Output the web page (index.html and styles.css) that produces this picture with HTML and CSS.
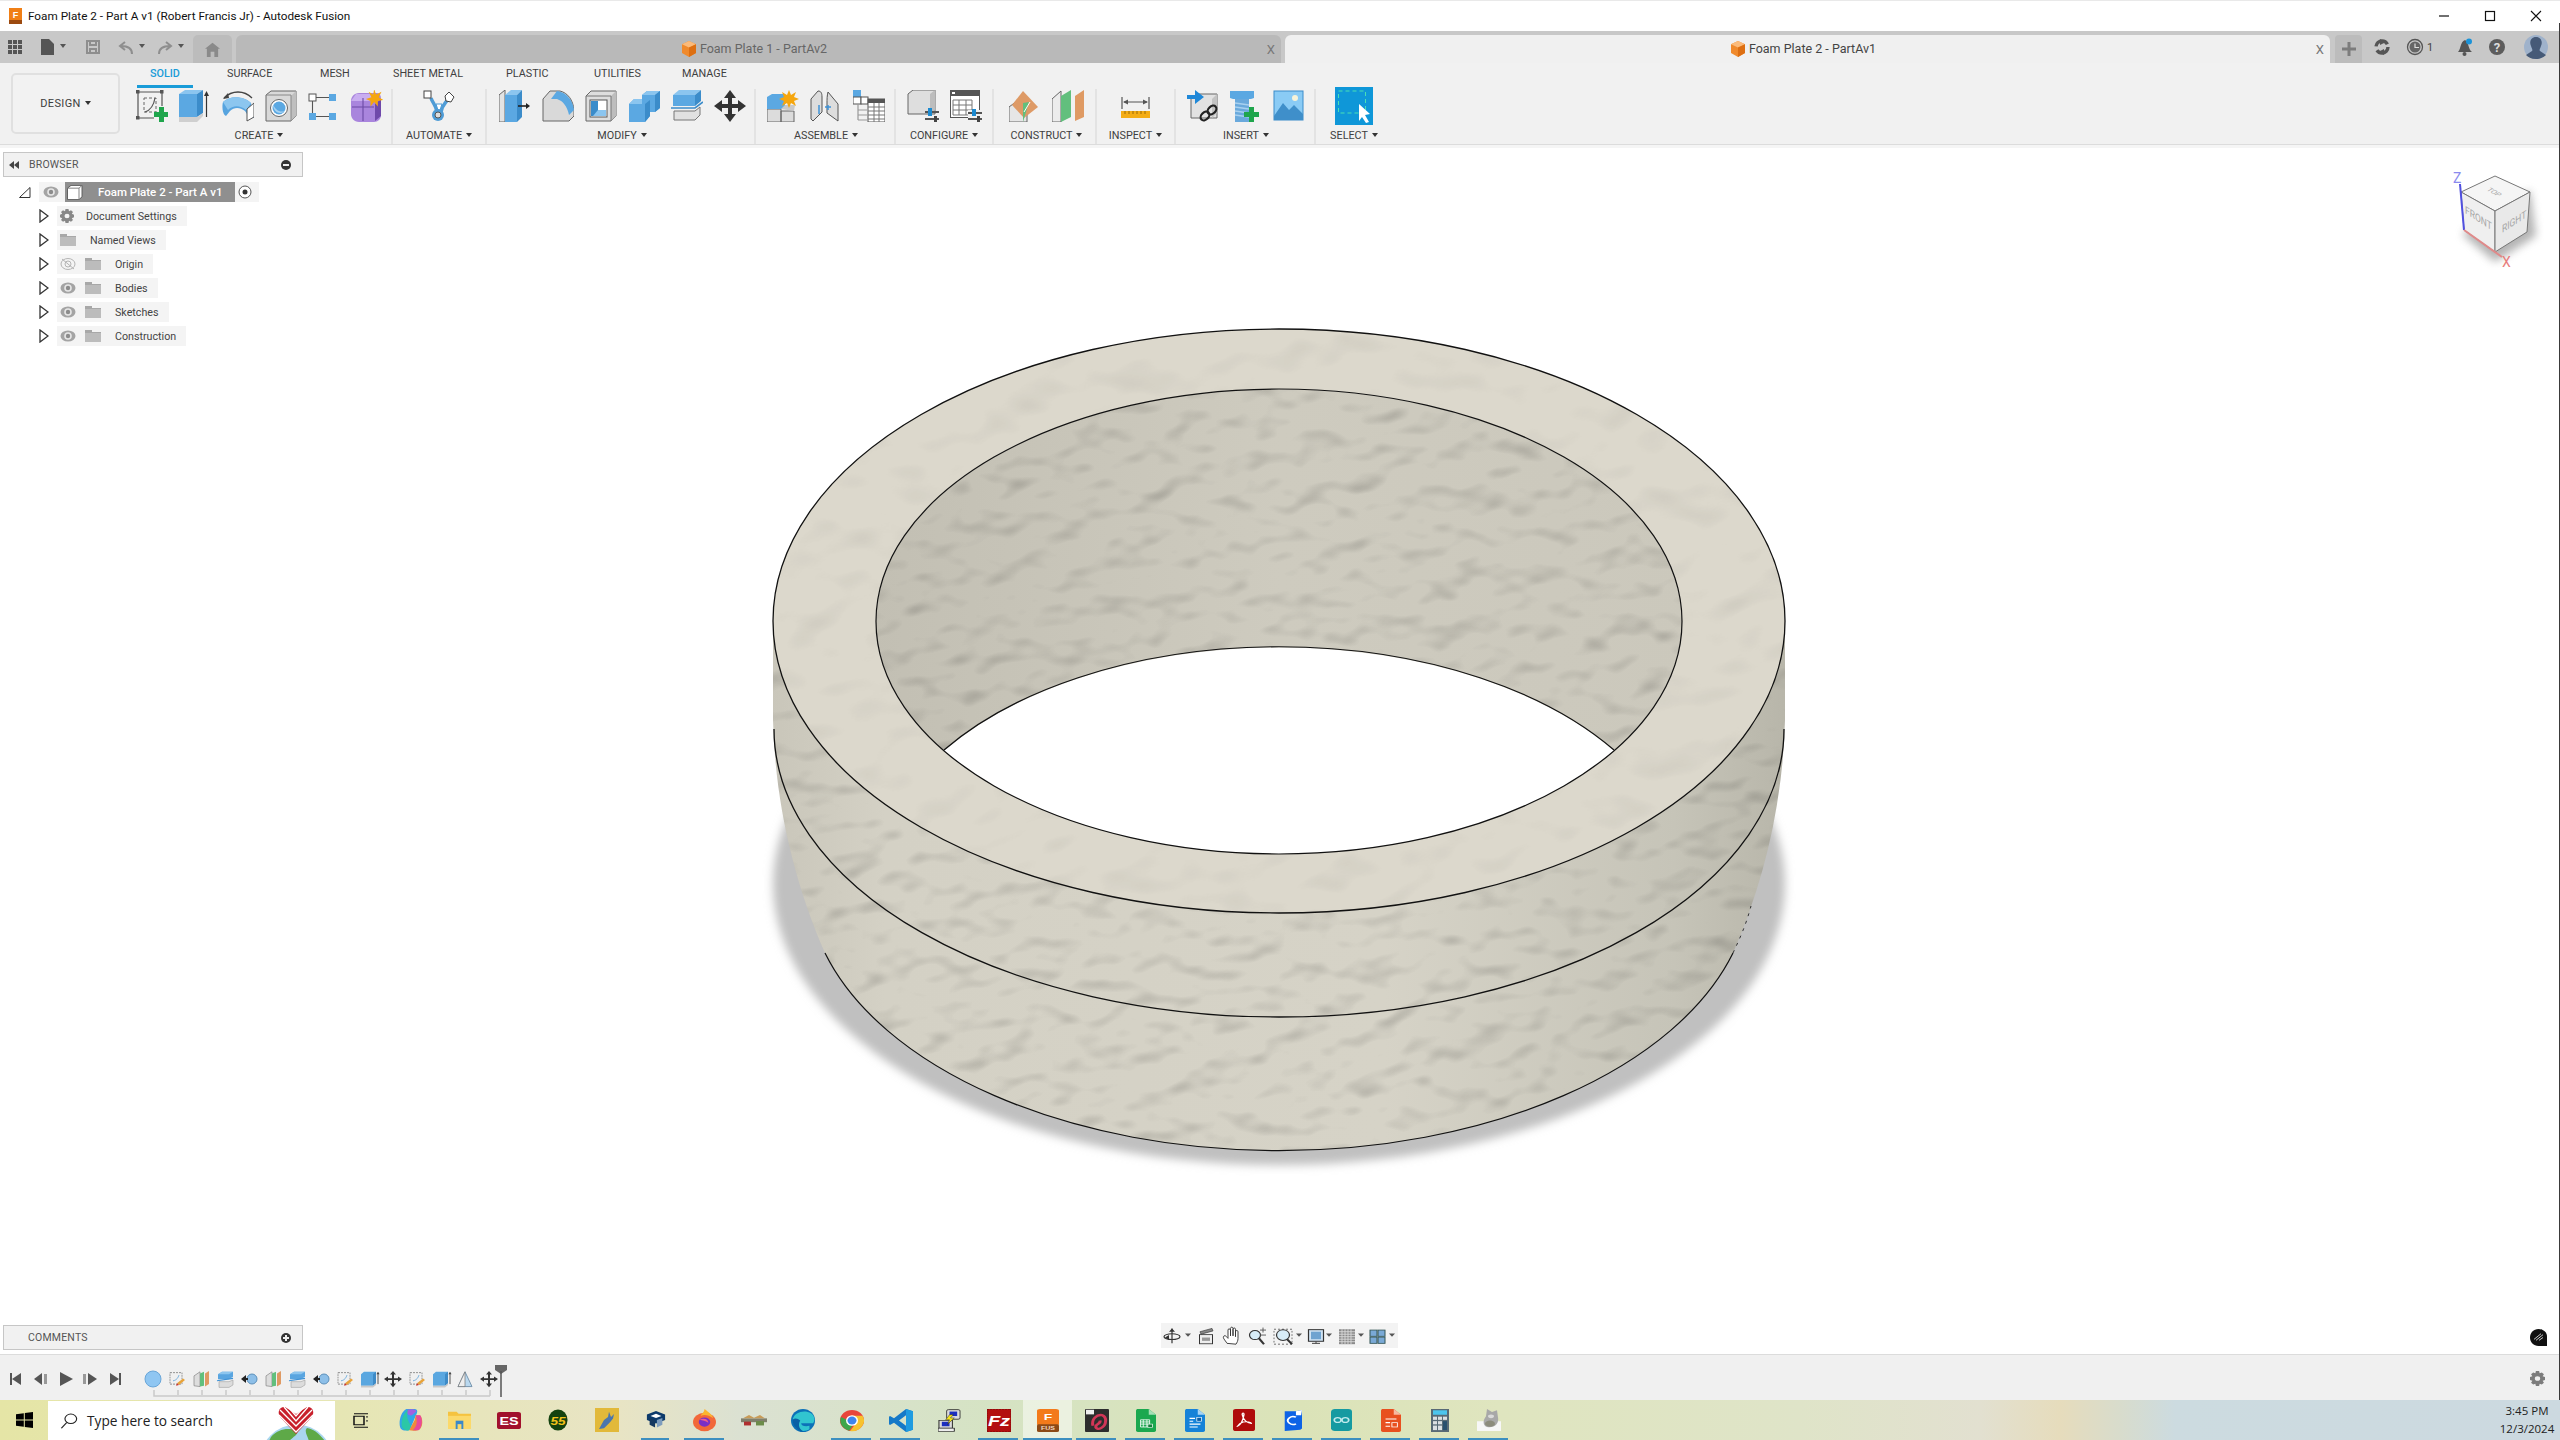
FILE: index.html
```html
<!DOCTYPE html>
<html lang="en">
<head>
<meta charset="utf-8">
<title>Foam Plate 2 - Part A v1 (Robert Francis Jr) - Autodesk Fusion</title>
<link rel="stylesheet" href="styles.css">
</head>
<body>
<svg class="defs" width="0" height="0">
  <defs>
    <g id="caret"><path d="M0 0H6L3 4Z" fill="#555"/></g>
    <g id="eye"><ellipse cx="8" cy="6" rx="7.5" ry="5.500" fill="#a4a4a4"/><circle cx="8" cy="6" r="3.800" fill="#e6e6e6"/><circle cx="8" cy="6" r="2.200" fill="#8c8c8c"/></g>
    <g id="folder"><path d="M0 0H7V2H16V12H0Z" fill="#a8a8a8"/><path d="M0 3H16V12H0Z" fill="#bcbcbc"/></g>
    <g id="tri"><path d="M1 1L9 7L1 13Z" fill="#fff" stroke="#333" stroke-width="1.3"/></g>
    <g id="m-sketch" transform="scale(1 .82)"><path d="M1 2H13V16H1Z" fill="#f0f0f0" stroke="#8a8a8a" stroke-dasharray="2 1"/><path d="M4 12C8 11 9 8 10 5" fill="none" stroke="#6aa9dc"/><path d="M8 15L14 9L16 11L10 17Z" fill="#e8a33a"/><path d="M8 15L7 18L10 17Z" fill="#c33"/></g>
    <g id="m-plane" transform="scale(1 .82)"><path d="M1 6L7 1V19L1 18Z" fill="#ddd" stroke="#888" stroke-width=".8"/><path d="M7 3L11 1V18L7 19Z" fill="#62bf7d"/><path d="M12 3L16 0V16L12 19Z" fill="#df9a63"/></g>
    <g id="m-split" transform="scale(1 .82)"><path d="M1 4L5 1H16V7L12 10H1Z" fill="#59a5e0"/><path d="M5 1H16L12 4H1Z" fill="#8cc5ee"/><path d="M0 12L16 9" stroke="#3f92d6" stroke-width="1.3"/><path d="M2 13H12L16 11V17L12 20H2Z" fill="#dcdcdc" stroke="#999" stroke-width=".6"/></g>
    <g id="m-joint"><circle cx="11" cy="9" r="5" fill="#8dbfe8" stroke="#5c90bb"/><path d="M0 9L5 5V13Z" fill="#222"/><path d="M3 9H7" stroke="#222" stroke-width="2"/></g>
    <g id="m-ext" transform="scale(1 .82)"><path d="M0 4L3 1H15V15L12 18H0Z" fill="#5aa7e0"/><path d="M12 4L15 1V15L12 18Z" fill="#3e8bc7"/><path d="M0 18H12L15 15V17L12 20H0Z" fill="#c8c8c8"/><path d="M17 2V16" stroke="#444"/><path d="M15.5 4L17 1L18.5 4Z" fill="#444"/></g>
    <g id="m-move" transform="scale(1 .9)"><path d="M8 0L11 4H9V8H13V6L17 9L13 12V10H9V14H11L8 18L5 14H7V10H3V12L-1 9L3 6V8H7V4H5Z" fill="#333"/></g>
    <g id="m-loft" transform="scale(1 .82)"><path d="M8 1L15 19H1Z" fill="#b9d8ef" stroke="#6f8ea8"/><path d="M8 1V19H1Z" fill="#eee" stroke="#777" stroke-width=".8"/></g>
    <g id="cube-or"><path d="M7 0L14 4V15L7 20L0 15V4Z" fill="#f08a2c"/><path d="M7 0L14 4L7 8L0 4Z" fill="#fbbb7b"/><path d="M7 8L14 4V15L7 20Z" fill="#dd6f12"/></g>
    <filter id="soft"><feGaussianBlur stdDeviation="5"/></filter>
    <filter id="soft2"><feGaussianBlur stdDeviation="4"/></filter>
    <filter id="bumps" x="0" y="0" width="100%" height="100%" color-interpolation-filters="sRGB">
      <feTurbulence type="fractalNoise" baseFrequency=".026 .038" numOctaves="2" seed="11"/>
      <feGaussianBlur stdDeviation="2"/>
      <feDiffuseLighting surfaceScale="2.600" diffuseConstant="1.160" lighting-color="#fff"><feDistantLight azimuth="250" elevation="60"/></feDiffuseLighting>
    </filter>
    <filter id="bumps-soft" x="0" y="0" width="100%" height="100%" color-interpolation-filters="sRGB">
      <feTurbulence type="fractalNoise" baseFrequency=".018 .026" numOctaves="2" seed="5"/>
      <feGaussianBlur stdDeviation="4"/>
      <feDiffuseLighting surfaceScale="1.800" diffuseConstant="1.160" lighting-color="#fff"><feDistantLight azimuth="250" elevation="60"/></feDiffuseLighting>
    </filter>
    <linearGradient id="bodyfill" x1="0" x2="1" y1="0" y2="0"><stop offset="0" stop-color="#c8c5b9"/><stop offset=".12" stop-color="#d4d1c5"/><stop offset=".6" stop-color="#d6d3c7"/><stop offset=".88" stop-color="#c6c4b8"/><stop offset="1" stop-color="#b6b4a8"/></linearGradient>
    <linearGradient id="wallfill" x1="0" x2="1" y1="0" y2="0"><stop offset="0" stop-color="#c2bfb3"/><stop offset=".5" stop-color="#cecbbf"/><stop offset="1" stop-color="#cbc8bc"/></linearGradient>
    <clipPath id="clip-body"><path d="M773 621V720C775 800 793 880 825 953A472 272 0 0 0 1733 953C1765 880 1783 800 1785 720V621Z"/></clipPath>
    <clipPath id="clip-inner"><ellipse cx="1279" cy="621.5" rx="403" ry="232.5"/></clipPath>
    <clipPath id="clip-top"><path clip-rule="evenodd" d="M773 621A506 292 0 0 1 1785 621A506 292 0 0 1 773 621ZM876 621.5A403 232.5 0 0 0 1682 621.5A403 232.5 0 0 0 876 621.5Z"/></clipPath>
  </defs>
</svg>

<div class="app">
  <header class="titlebar">
    <svg class="app-logo" width="13" height="16" viewBox="0 0 13 16"><rect width="13" height="12" fill="#f07f16"/><rect y="12" width="13" height="4" fill="#9c4a10"/><text x="6.500" y="9.500" class="logo-f">F</text></svg>
    <span class="title-text">Foam Plate 2 - Part A v1 (Robert Francis Jr) - Autodesk Fusion</span>
    <div class="win-btns">
      <svg width="46" height="30" viewBox="0 0 46 30"><path d="M18 15H28" stroke="#111" stroke-width="1.2"/></svg>
      <svg width="46" height="30" viewBox="0 0 46 30"><rect x="18.5" y="10.5" width="9" height="9" fill="none" stroke="#111" stroke-width="1.2"/></svg>
      <svg width="46" height="30" viewBox="0 0 46 30"><path d="M18 10L28 20M28 10L18 20" stroke="#111" stroke-width="1.1"/></svg>
    </div>
  </header>

  <div class="tabstrip">
    <svg class="quick" width="185" height="28" viewBox="8 35 185 28">
      <g fill="#555"><rect x="8" y="40" width="4" height="4"/><rect x="13" y="40" width="4" height="4"/><rect x="18" y="40" width="4" height="4"/><rect x="8" y="45" width="4" height="4"/><rect x="13" y="45" width="4" height="4"/><rect x="18" y="45" width="4" height="4"/><rect x="8" y="50" width="4" height="4"/><rect x="13" y="50" width="4" height="4"/><rect x="18" y="50" width="4" height="4"/></g>
      <path d="M41 39H49L54 44V55H41Z" fill="#555"/>
      <use href="#caret" x="60" y="44"/>
      <path d="M87 41H99V53H87Z M90 41V45H96V41 M90 53V49H96V53" fill="none" stroke="#8e8e8e" stroke-width="2"/>
      <path d="M132 54C132 48 128 46 121 46M125 42L120 46L125 50" fill="none" stroke="#8e8e8e" stroke-width="2"/>
      <use href="#caret" x="139" y="44"/>
      <path d="M159 54C159 48 163 46 170 46M166 42L171 46L166 50" fill="none" stroke="#8e8e8e" stroke-width="2"/>
      <use href="#caret" x="178" y="44"/>
    </svg>
    <div class="home-tab"><svg width="15" height="15" viewBox="0 0 16 20" preserveAspectRatio="none"><path d="M8 1L16 9H14V20H10V13H6V20H2V9H0Z" fill="#8a8a8a"/></svg></div>
    <div class="doc-tab doc-off">
      <span></span>
      <span class="doc-label"><svg width="14" height="16" viewBox="0 0 14 20" preserveAspectRatio="none"><use href="#cube-or"/></svg>Foam Plate 1 - PartAv2</span>
      <span class="doc-x">X</span>
    </div>
    <div class="doc-tab doc-on">
      <span></span>
      <span class="doc-label"><svg width="14" height="16" viewBox="0 0 14 20" preserveAspectRatio="none"><use href="#cube-or"/></svg>Foam Plate 2 - PartAv1</span>
      <span class="doc-x">X</span>
    </div>
    <div class="plus-tab"><svg width="14" height="14" viewBox="0 0 14 14"><path d="M7 0V14M0 7H14" stroke="#7c7c7c" stroke-width="3"/></svg></div>
    <svg class="status-icons" width="186" height="28" viewBox="2366 35 186 28">
      <circle cx="2382" cy="47" r="6" fill="none" stroke="#555" stroke-width="3.400" stroke-dasharray="15 4"/><path d="M2380 39L2386 42L2380 45Z M2384 49L2378 52L2384 55Z" fill="#555"/>
      <circle cx="2415" cy="47" r="7.500" fill="none" stroke="#555" stroke-width="1.300"/><circle cx="2415" cy="47" r="5.500" fill="#666"/><path d="M2415 43.500V47.500H2419" fill="none" stroke="#ddd" stroke-width="1.200"/>
      <text x="2427" y="51" class="status-num">1</text>
      <path d="M2458 52C2461 49 2460 42 2465 40C2469 42 2468 49 2472 52Z" fill="#555"/><circle cx="2464.500" cy="54" r="2" fill="#555"/><circle cx="2469" cy="41.500" r="3" fill="#1b93d8"/>
      <circle cx="2497" cy="47" r="8" fill="#5c5c5c"/><text x="2497" y="52" class="status-q">?</text>
      <circle cx="2536" cy="47" r="12" fill="#9fb2cb"/><path d="M2536 37C2541 37 2543 42 2541 46C2540 49 2539 50 2540 51L2546 55C2544 57 2540 59 2536 59C2531 59 2528 57 2526 55L2532 51C2533 50 2532 49 2531 46C2529 42 2531 37 2536 37Z" fill="#465a77"/>
    </svg>
  </div>

  <section class="ribbon">
    <div class="design-wrap"><button class="design-btn">DESIGN<i class="tri-down"></i></button></div>
    <div class="ribbon-main">
      <nav class="ribbon-tabs">
        <span class="rtab rtab-on">SOLID</span><span class="rtab">SURFACE</span><span class="rtab">MESH</span><span class="rtab">SHEET METAL</span><span class="rtab">PLASTIC</span><span class="rtab">UTILITIES</span><span class="rtab">MANAGE</span>
      </nav>
      <div class="ribbon-groups">
        <div class="rgroup g-create">
          <div class="ricons">
            <svg width="32" height="32" viewBox="0 0 32 32"><path d="M2 2H26V16M2 2V28H18" fill="none" stroke="#555" stroke-width="1.2"/><g fill="#555"><rect x="0" y="0" width="3.500" height="3.500"/><rect x="24" y="0" width="3.500" height="3.500"/><rect x="0" y="26" width="3.500" height="3.500"/></g><path d="M8 8H20V22H8Z" fill="none" stroke="#666" stroke-dasharray="3 2"/><path d="M9 22C15 20 18 14 19 8" fill="none" stroke="#555" stroke-width="1.200"/><path d="M23 17H28V22H33V27H28V32H23V27H18V22H23Z" fill="#1fa54c"/></svg>
            <svg width="32" height="32" viewBox="0 0 32 32"><path d="M0 4H18V27H0Z" fill="#5ba8e2"/><path d="M0 4L6 0H24L18 4Z" fill="#8bc5ef"/><path d="M18 4L24 0V23L18 27Z" fill="#3b8cca"/><path d="M0 27H18L24 23V26L18 32H0Z" fill="#cfcfcf"/><path d="M27.500 3V27" stroke="#333" stroke-width="1.200"/><path d="M25 6L27.500 1L30 6Z" fill="#333"/></svg>
            <svg width="32" height="32" viewBox="0 0 32 32"><path d="M2 8C10 0 22 0 30 8" fill="none" stroke="#444" stroke-width="1.300"/><path d="M1 9L6 3L7 8Z" fill="#444"/><path d="M1 12C8 5 22 6 29 13L32 28L27 27L23 21C18 17 12 17 8 21L4 26C0 24 0 15 1 12Z" fill="#57a4df"/><path d="M1 12C8 5 22 6 29 13L24 20C18 15 11 15 6 20Z" fill="#8cc6ef"/><path d="M25 19L32 13V27L25 31Z" fill="#fff" stroke="#555"/></svg>
            <svg width="32" height="32" viewBox="0 0 32 32"><path d="M1 5L6 1H31V26L26 31H1Z" fill="#d9d9d9" stroke="#666"/><path d="M26 6L31 1V26L26 31Z" fill="#bfbfbf"/><path d="M1 5H26V31" fill="none" stroke="#888"/><circle cx="14" cy="18" r="8.500" fill="#fff" stroke="#666"/><circle cx="14" cy="18" r="6.500" fill="#5ba8e2"/><path d="M8 14C10 20 15 23 20 21C16 25 8 23 8 14Z" fill="#a9d3f2"/></svg>
            <svg width="32" height="32" viewBox="0 0 32 32"><rect x="1" y="4" width="7" height="7" fill="#fff" stroke="#555"/><rect x="21" y="4" width="7" height="7" fill="#5ba8e2"/><rect x="1" y="23" width="7" height="7" fill="#5ba8e2"/><rect x="21" y="23" width="7" height="7" fill="#5ba8e2"/><path d="M8 7.500H21M4.500 11V23M8 26.500H21" stroke="#555" stroke-width="1.100"/></svg>
            <svg width="32" height="32" viewBox="0 0 32 32"><path d="M8 3H26C29 3 30 6 30 9V25C30 29 27 32 23 32H8C3 32 0 28 0 24V11C0 7 3 3 8 3Z" fill="#a985dd"/><path d="M0 11L5 4L25 4L20 11Z" fill="#c9aef0"/><path d="M24 14L30 9V26L24 31Z" fill="#6f49aa"/><path d="M1 17H23M12 8V31" stroke="#6c4aa5" stroke-width="1.100"/><path d="M23 0L25 6L31 3L28 9L33 12L27 13L27 19L23 14L19 19L19 13L14 11L20 9L17 3L22 6Z" fill="#f5a60e" transform="translate(2 -1) scale(.92)"/></svg>
          </div>
          <div class="rlabel">CREATE<i class="tri-down"></i></div>
        </div>
        <div class="rgroup g-auto">
          <div class="ricons">
            <svg width="32" height="32" viewBox="0 0 32 32"><path d="M8 8C10 14 13 15 14 22H18C19 15 22 14 26 8" fill="none" stroke="#4f9cd6" stroke-width="3.500"/><path d="M13 14H19L17 20H15Z" fill="#fff" stroke="#4f9cd6"/><circle cx="15" cy="25" r="6" fill="#4f9cd6"/><circle cx="15" cy="25" r="3" fill="#ddd" stroke="#555"/><rect x="1" y="1" width="7" height="7" fill="#fff" stroke="#444"/><path d="M26 2L31 7L28 12L23 11L22 6Z" fill="#fff" stroke="#444"/></svg>
          </div>
          <div class="rlabel">AUTOMATE<i class="tri-down"></i></div>
        </div>
        <div class="rgroup g-modify">
          <div class="ricons">
            <svg width="32" height="32" viewBox="0 0 32 32"><path d="M0 5L6 0V32H0Z" fill="#e3e3e3" stroke="#666"/><path d="M6 5L12 0H23L18 5Z" fill="#8bc5ef"/><path d="M6 5H18V32H6Z" fill="#5ba8e2"/><path d="M18 5L23 0V27L18 32Z" fill="#3b8cca"/><path d="M19 16H28" stroke="#222" stroke-width="1.600"/><path d="M27 13L31 16L27 19Z" fill="#222"/></svg>
            <svg width="32" height="32" viewBox="0 0 32 32"><path d="M1 9L8 1H18C26 3 31 10 32 20V26L27 31H1Z" fill="#d9d9d9" stroke="#666"/><path d="M15 1C24 2 31 10 32 20L27 25C25 16 21 11 15 9L9 9Z" fill="#5ba8e2"/></svg>
            <svg width="32" height="32" viewBox="0 0 32 32"><path d="M1 6L6 1H31V26L26 31H1Z" fill="#dedede" stroke="#666"/><path d="M26 6L31 1V26L26 31Z" fill="#bdbdbd"/><path d="M1 6H26V31" fill="none" stroke="#777"/><rect x="5" y="10" width="17" height="17" fill="#fff" stroke="#555"/><path d="M6 11H13V20H21V26H6Z" fill="#3b8cca"/><path d="M13 20H21V26H8L13 20Z" fill="#8bc5ef"/></svg>
            <svg width="32" height="32" viewBox="0 0 32 32"><path d="M14 5L19 1H32V18L27 22H22V26L17 32H1V14L6 9H14Z" fill="#5ba8e2"/><path d="M14 5L19 1H32L27 5Z" fill="#8bc5ef"/><path d="M1 14L6 9H14V14Z" fill="#8bc5ef"/><path d="M27 5L32 1V18L27 22Z M17 14L22 10V26L17 32Z" fill="#3b8cca"/></svg>
            <svg width="32" height="32" viewBox="0 0 32 32"><path d="M2 5L8 0H30L24 5Z" fill="#8bc5ef"/><path d="M2 5H24V16H2Z" fill="#5ba8e2"/><path d="M24 5L30 0V11L24 16Z" fill="#3b8cca"/><path d="M0 18H24L32 12" fill="none" stroke="#3b8cca" stroke-width="1.600"/><path d="M3 21H24L29 17V25L24 30H3Z" fill="#e1e1e1" stroke="#777"/></svg>
            <svg width="32" height="32" viewBox="0 0 32 32"><path d="M16 0L22 8H18V14H24V10L32 16L24 22V18H18V24H22L16 32L10 24H14V18H8V22L0 16L8 10V14H14V8H10Z" fill="#333"/></svg>
          </div>
          <div class="rlabel">MODIFY<i class="tri-down"></i></div>
        </div>
        <div class="rgroup g-assemble">
          <div class="ricons">
            <svg width="32" height="32" viewBox="0 0 32 32"><path d="M0 19H14V32H0ZM14 21H27V32H14Z" fill="#dcdcdc" stroke="#666"/><path d="M0 7L5 4H18V19H0Z" fill="#5ba8e2"/><path d="M14 19L18 15L28 15L27 21Z" fill="#c9c9c9"/><path d="M22 0L24 5L29 2L27 7L32 9L27 11L29 16L24 13L22 18L20 13L15 16L17 11L12 9L17 7L15 2L20 5Z" fill="#f5a60e"/></svg>
            <svg width="32" height="32" viewBox="0 0 32 32"><path d="M1 29V9L8 1C11 1 12 3 12 7V22L3 31Z" fill="#ddd" stroke="#555"/><path d="M28 29V14L18 2C17 6 17 9 17 14V23L28 31Z" fill="#ddd" stroke="#555"/><path d="M9 15V24M18 15V20M15 17H21" stroke="#3f92d6" stroke-width="1.500"/></svg>
            <svg width="32" height="32" viewBox="0 0 32 32"><rect x="0" y="0" width="8" height="7" fill="#5ba8e2"/><rect x="0" y="7" width="8" height="7" fill="#fff" stroke="#555"/><rect x="8" y="7" width="7" height="7" fill="#fff" stroke="#555"/><path d="M5 14V30M5 20H14M5 25H14M5 30H14" stroke="#999" stroke-width="1.200"/><rect x="15" y="9" width="17" height="23" fill="#fff" stroke="#555"/><rect x="15" y="9" width="17" height="4" fill="#555"/><path d="M15 17H32M15 21H32M15 25H32M15 29H32M21 13V32M26 13V32" stroke="#777"/></svg>
          </div>
          <div class="rlabel">ASSEMBLE<i class="tri-down"></i></div>
        </div>
        <div class="rgroup g-config">
          <div class="ricons">
            <svg width="32" height="32" viewBox="0 0 32 32"><path d="M1 4L6 0H28V24H1Z" fill="#dedede" stroke="#666"/><path d="M23 4L28 0V20L23 24Z" fill="#bdbdbd"/><path d="M18 22H32M18 29H32" stroke="#555" stroke-width="2"/><path d="M21 18H25V26H21Z" fill="#1c8ad0"/><rect x="27" y="26" width="3" height="6" fill="#444"/></svg>
            <svg width="32" height="32" viewBox="0 0 32 32"><rect x="0.500" y="0.500" width="29" height="27" fill="#fff" stroke="#555"/><rect x="0" y="0" width="30" height="6" fill="#555"/><rect x="2" y="2" width="3" height="2" fill="#fff"/><path d="M3 10H22V25H3ZM3 15H22M3 20H22M9 10V25M16 10V25" fill="none" stroke="#777"/><rect x="18" y="20" width="14" height="12" fill="#f1f1f1"/><path d="M18 23H32M18 29H32" stroke="#555" stroke-width="2"/><path d="M22 19H26V26H22Z" fill="#1c8ad0"/><rect x="27" y="26" width="3" height="6" fill="#444"/></svg>
          </div>
          <div class="rlabel">CONFIGURE<i class="tri-down"></i></div>
        </div>
        <div class="rgroup g-construct">
          <div class="ricons">
            <svg width="32" height="32" viewBox="0 0 32 32"><path d="M0 17L8 11H18V32H0Z" fill="#e6e6e6" stroke="#666"/><path d="M14 1L29 17L15 28L3 15Z" fill="#de9a66"/><path d="M14 13L20 12L14 32Z" fill="#62bf7d"/><path d="M15 22L21 12" stroke="#fff"/></svg>
            <svg width="32" height="32" viewBox="0 0 32 32"><path d="M0 9L9 1V32H0Z" fill="#ececec" stroke="#666"/><path d="M9 6L19 0V27L9 32Z" fill="#62bf7d"/><path d="M23 6L32 0V27L23 31Z" fill="#df9a63"/></svg>
          </div>
          <div class="rlabel">CONSTRUCT<i class="tri-down"></i></div>
        </div>
        <div class="rgroup g-inspect">
          <div class="ricons">
            <svg width="32" height="32" viewBox="0 0 32 32"><path d="M2 7V19M29 7V19M4 12H27" stroke="#555" stroke-width="1.200"/><path d="M3 12L8 9.500V14.500ZM28 12L23 9.500V14.500Z" fill="#555"/><rect x="1" y="21" width="29" height="7" fill="#f4ad16"/><path d="M5 21V24M9 21V24M13 21V24M17 21V24M21 21V24M25 21V24" stroke="#9a6b05"/></svg>
          </div>
          <div class="rlabel">INSPECT<i class="tri-down"></i></div>
        </div>
        <div class="rgroup g-insert">
          <div class="ricons">
            <svg width="32" height="32" viewBox="0 0 32 32"><path d="M4 9L9 4H30V28H4Z" fill="#e2e2e2" stroke="#666"/><path d="M25 9L30 4V23L25 28Z" fill="#c3c3c3"/><path d="M0 5H8V0L17 7L8 14V9H0Z" fill="#1f88d8"/><g fill="none" stroke="#222" stroke-width="2.200"><ellipse cx="18" cy="26" rx="5" ry="3.600" transform="rotate(-45 18 26)"/><ellipse cx="25" cy="20" rx="5" ry="3.600" transform="rotate(-45 25 20)"/></g></svg>
            <svg width="32" height="32" viewBox="0 0 32 32"><path d="M0 1H24V8L21 9H3L0 8Z" fill="#5ba8e2"/><path d="M5 9H19V32H5Z" fill="#6aa9dc"/><path d="M5 13L19 15M5 17L19 19M5 21L19 23M5 25L19 27" stroke="#a8d0ef" stroke-width="1.500"/><path d="M16 17H21V22H26V27H21V32H16V27H11V22H16Z" fill="#1fa54c" transform="translate(3 0)"/></svg>
            <svg width="32" height="32" viewBox="0 0 32 32"><rect x="1" y="1" width="29" height="29" fill="#8acbf5" stroke="#3b8cca"/><circle cx="22" cy="8" r="3" fill="#f7f3d9"/><path d="M1 26L10 13L16 20L21 15L30 24V30H1Z" fill="#3f8fca"/></svg>
          </div>
          <div class="rlabel">INSERT<i class="tri-down"></i></div>
        </div>
        <div class="rgroup g-select">
          <svg class="select-icon" width="38" height="38" viewBox="0 0 38 38"><rect width="38" height="38" fill="#0f97d8"/><rect x="3.500" y="4" width="27" height="22" fill="none" stroke="#4be0b4" stroke-dasharray="4 3"/><path d="M24 17L35 27L30 28L34 35L31 36L27 30L24 34Z" fill="#fff"/></svg>
          <div class="rlabel">SELECT<i class="tri-down"></i></div>
        </div>
      </div>
    </div>
  </section>
  <div class="ribbon-foot"></div>

  <main class="viewport">
    <svg class="scene" width="2560" height="1206" viewBox="0 148 2560 1206">
      <ellipse cx="1279" cy="884" rx="506" ry="281" fill="#c0c0c0" filter="url(#soft)"/>
      <g clip-path="url(#clip-body)">
        <rect x="760" y="600" width="1040" height="580" fill="url(#bodyfill)"/>
        <rect class="tex" x="760" y="600" width="1040" height="580" filter="url(#bumps)"/>
      </g>
      <path d="M825 953A472 272 0 0 0 1733 953" fill="none" stroke="#111" stroke-width="1.200"/>
      <path d="M1733 953C1740 938 1746 925 1751 906" fill="none" stroke="#333" stroke-dasharray="3 5"/>
      <path d="M774 729A505 288 0 0 0 1784 729" fill="none" stroke="#111" stroke-width="1.300"/>
      <g clip-path="url(#clip-inner)">
        <rect x="870" y="380" width="820" height="480" fill="url(#wallfill)"/>
        <rect class="tex" x="870" y="380" width="820" height="480" filter="url(#bumps)"/>
        <ellipse cx="1279" cy="880" rx="403" ry="232.500" fill="#fff"/>
      </g>
      <g clip-path="url(#clip-top)">
        <rect x="770" y="325" width="1020" height="595" fill="#dcd8cc"/>
        <rect class="tex" x="770" y="325" width="1020" height="595" filter="url(#bumps-soft)"/>
      </g>
      <path d="M944 750A403 232.500 0 0 1 1614 750" fill="none" stroke="#111" stroke-width="1.200"/>
      <ellipse cx="1279" cy="621.500" rx="403" ry="232.500" fill="none" stroke="#111" stroke-width="1.200"/>
      <ellipse cx="1279" cy="621" rx="506" ry="292" fill="none" stroke="#111" stroke-width="1.300"/>

      <path d="M2462 234L2495 262L2536 236L2530 190Z" fill="#777" opacity=".55" filter="url(#soft2)"/>
      <path d="M2495 176L2530 192L2495 211L2461 192Z" fill="#f5f5f5" stroke="#777"/>
      <path d="M2461 192L2495 211V252L2464 230Z" fill="#efefef" stroke="#777"/>
      <path d="M2495 211L2530 192L2527 232L2495 252Z" fill="#e9e9e9" stroke="#777"/>
      <text class="vc-text vc-top" transform="matrix(.8 .45 -.8 .45 2486 190)">TOP</text>
      <text class="vc-text" transform="matrix(.85 .55 0 1.050 2465 213)">FRONT</text>
      <text class="vc-text" transform="matrix(.85 -.55 0 1.050 2502 233)">RIGHT</text>
      <path d="M2460 184L2464 230" stroke="#5050e0" stroke-width="2"/>
      <path d="M2464 230L2502 257" stroke="#e08a8a" stroke-width="2"/>
      <text x="2453" y="183" class="vc-axis vc-z">Z</text>
      <text x="2502" y="267" class="vc-axis vc-x">X</text>
    </svg>

    <aside class="panel browser">
      <header class="panel-head"><svg width="10" height="8" viewBox="0 0 10 8"><path d="M5 0V8L0 4ZM10 0V8L5 4Z" fill="#444"/></svg><span class="panel-title">BROWSER</span><i class="pin"><b></b></i></header>
      <ul class="tree">
        <li class="tree-row root-row">
          <svg class="root-tri" width="12" height="11" viewBox="0 0 12 11"><path d="M11 .5V10.500H.5Z" fill="#fff" stroke="#333"/></svg>
          <div class="root-pill">
            <svg width="16" height="12" viewBox="0 0 16 12"><use href="#eye"/></svg>
            <div class="root-name"><svg width="16" height="15" viewBox="0 0 16 19" preserveAspectRatio="none"><path d="M.5 4L4 .5H15V15L12 18.500H.5Z" fill="#fff" stroke="#555"/><path d="M.5 4H12V18.500M12 4L15 .5" fill="none" stroke="#777"/></svg><span>Foam Plate 2 - Part A v1</span></div>
            <svg class="root-radio" width="14" height="14" viewBox="0 0 14 14"><circle cx="7" cy="7" r="6" fill="#fff" stroke="#555"/><circle cx="7" cy="7" r="2.500" fill="#333"/></svg>
          </div>
        </li>
        <li class="tree-row"><svg class="tree-tri" width="10" height="14" viewBox="0 0 10 14"><use href="#tri"/></svg><div class="pill"><svg width="14" height="14" viewBox="0 0 14 16" preserveAspectRatio="none"><path d="M5.500 0H8.500L9 2.500L11 1.500L13 3.500L11.800 5.500L14 6.500V9.500L11.800 10.500L13 12.500L11 14.500L9 13.500L8.500 16H5.500L5 13.500L3 14.500L1 12.500L2.200 10.500L0 9.500V6.500L2.200 5.500L1 3.500L3 1.500L5 2.500ZM7 5.500A2.500 2.500 0 1 0 7 10.500A2.500 2.500 0 1 0 7 5.500Z" fill="#888"/></svg><span class="t-doc">Document Settings</span></div></li>
        <li class="tree-row"><svg class="tree-tri" width="10" height="14" viewBox="0 0 10 14"><use href="#tri"/></svg><div class="pill"><svg width="16" height="12" viewBox="0 0 16 12"><use href="#folder"/></svg><span class="t-views">Named Views</span></div></li>
        <li class="tree-row"><svg class="tree-tri" width="10" height="14" viewBox="0 0 10 14"><use href="#tri"/></svg><div class="pill"><svg width="16" height="12" viewBox="0 0 16 12"><ellipse cx="8" cy="6" rx="7" ry="5.500" fill="none" stroke="#b4b4b4"/><circle cx="8" cy="6" r="3" fill="none" stroke="#b4b4b4"/><path d="M2 1L14 11" stroke="#b4b4b4"/></svg><svg class="tree-folder" width="16" height="12" viewBox="0 0 16 12"><use href="#folder"/></svg><span class="t-item">Origin</span></div></li>
        <li class="tree-row"><svg class="tree-tri" width="10" height="14" viewBox="0 0 10 14"><use href="#tri"/></svg><div class="pill"><svg width="16" height="12" viewBox="0 0 16 12"><use href="#eye"/></svg><svg class="tree-folder" width="16" height="12" viewBox="0 0 16 12"><use href="#folder"/></svg><span class="t-item">Bodies</span></div></li>
        <li class="tree-row"><svg class="tree-tri" width="10" height="14" viewBox="0 0 10 14"><use href="#tri"/></svg><div class="pill"><svg width="16" height="12" viewBox="0 0 16 12"><use href="#eye"/></svg><svg class="tree-folder" width="16" height="12" viewBox="0 0 16 12"><use href="#folder"/></svg><span class="t-item">Sketches</span></div></li>
        <li class="tree-row"><svg class="tree-tri" width="10" height="14" viewBox="0 0 10 14"><use href="#tri"/></svg><div class="pill"><svg width="16" height="12" viewBox="0 0 16 12"><use href="#eye"/></svg><svg class="tree-folder" width="16" height="12" viewBox="0 0 16 12"><use href="#folder"/></svg><span class="t-item">Construction</span></div></li>
      </ul>
    </aside>

    <aside class="panel comments">
      <header class="panel-head"><span class="panel-title panel-title-c">COMMENTS</span><i class="pin pin-plus"><b></b><b class="pin-v"></b></i></header>
    </aside>

    <div class="navbar">
      <svg width="237" height="25" viewBox="1161 1323 237 25">
        <g transform="translate(0 227) scale(1 .83)">
        <g fill="none" stroke="#333" stroke-width="1.200"><path d="M1172 1327V1345M1172 1327"/><ellipse cx="1172" cy="1337" rx="8" ry="3.500"/></g><path d="M1169 1331L1172 1327L1175 1331Z M1165 1338L1169 1335V1341Z" fill="#333"/>
        <use href="#caret" x="1185" y="1333"/>
        <path d="M1200 1331L1212 1327L1213 1330L1201 1334Z" fill="#888" stroke="#333" stroke-width=".7"/><rect x="1199.500" y="1334.500" width="13" height="11" fill="#eee" stroke="#333"/><rect x="1202" y="1338" width="8" height="4" fill="#999"/>
        <path d="M1227 1345C1225 1341 1222 1338 1224 1336C1226 1335 1227 1338 1228 1339V1329C1228 1327 1230 1327 1230.500 1329V1336V1327C1230.500 1325 1233 1325 1233 1327V1336V1328C1233 1326 1235.500 1326 1235.500 1328V1337V1331C1235.500 1329 1238 1329 1238 1331V1339C1238 1342 1237 1344 1236 1346Z" fill="#fff" stroke="#333"/>
        <circle cx="1255" cy="1335" r="5.500" fill="#d7ecf7" stroke="#333" stroke-width="1.200"/><path d="M1259 1339L1264 1346" stroke="#333" stroke-width="2.200"/><path d="M1260 1329H1266M1263 1326V1332M1260 1335H1266" stroke="#555"/>
        <path d="M1274 1328H1292V1346H1274Z" fill="none" stroke="#666" stroke-dasharray="2 2"/><circle cx="1283" cy="1335" r="6.500" fill="#d7ecf7" stroke="#333" stroke-width="1.200"/><path d="M1287 1340L1292 1346" stroke="#333" stroke-width="2.200"/>
        <use href="#caret" x="1296" y="1333"/>
        <rect x="1308.500" y="1328.500" width="15" height="14" fill="#cfe2f2" stroke="#333" stroke-width="1.200"/><rect x="1311" y="1331" width="10" height="9" fill="#6fa3d0"/><path d="M1312 1345H1320M1316 1343V1345" stroke="#333"/>
        <use href="#caret" x="1326" y="1333"/>
        <rect x="1339" y="1328" width="16" height="18" fill="#8a8a8a"/><path d="M1339 1331H1355M1339 1334H1355M1339 1337H1355M1339 1340H1355M1339 1343H1355M1342 1328V1346M1345 1328V1346M1348 1328V1346M1351 1328V1346" stroke="#d9d9d9"/>
        <use href="#caret" x="1358" y="1333"/>
        <rect x="1370" y="1329" width="7" height="7.500" fill="#7aa9d6" stroke="#355"/><rect x="1378" y="1329" width="7" height="7.500" fill="#7aa9d6" stroke="#355"/><rect x="1370" y="1337.500" width="7" height="7.500" fill="#7aa9d6" stroke="#355"/><rect x="1378" y="1337.500" width="7" height="7.500" fill="#7aa9d6" stroke="#355"/>
        <use href="#caret" x="1389" y="1333"/>
        </g>
      </svg>
    </div>

    <svg class="feedback" width="17" height="17" viewBox="0 0 17 18" preserveAspectRatio="none"><path d="M8.500 0C13 0 17 3.500 17 8V18H8.500C3.500 18 0 14 0 9C0 4 3.500 0 8.500 0Z" fill="#111"/><path d="M4 11L11 5M6 12L13 6M9 12L13 9" stroke="#ccc"/></svg>
  </main>

  <footer class="timeline">
    <svg class="timeline-strip" width="510" height="46" viewBox="0 1354 510 46">
      <g fill="#555"><rect x="10" y="1372" width="2" height="12"/><path d="M21 1372V1384L12 1378Z"/>
        <path d="M42 1372V1384L34 1378Z"/><rect x="44" y="1373" width="3" height="10" fill="#999"/>
        <path d="M60 1371L73 1378L60 1385Z"/>
        <rect x="83" y="1373" width="3" height="10" fill="#999"/><path d="M88 1372V1384L97 1378Z"/>
        <path d="M110 1372V1384L119 1378Z"/><rect x="119" y="1372" width="2" height="12"/></g>
      <path d="M154 1389V1395H490M178 1389V1394M202 1389V1394M226 1389V1394M250 1389V1394M274 1389V1394M298 1389V1394M322 1389V1394M346 1389V1394M370 1389V1394M394 1389V1394M418 1389V1394M442 1389V1394M466 1389V1394M490 1389V1395" fill="none" stroke="#c9c9c9" stroke-width="1.500"/>
      <circle cx="153" cy="1378" r="8" fill="#8fc6f2" stroke="#6aa6d8"/>
      <use href="#m-sketch" x="169" y="1370"/>
      <use href="#m-plane" x="193" y="1370"/>
      <use href="#m-split" x="217" y="1370"/>
      <use href="#m-joint" x="241" y="1369"/>
      <use href="#m-plane" x="265" y="1370"/>
      <use href="#m-split" x="289" y="1370"/>
      <use href="#m-joint" x="313" y="1369"/>
      <use href="#m-sketch" x="337" y="1370"/>
      <use href="#m-ext" x="361" y="1370"/>
      <use href="#m-move" x="385" y="1370"/>
      <use href="#m-sketch" x="409" y="1370"/>
      <use href="#m-ext" x="433" y="1370"/>
      <use href="#m-loft" x="457" y="1370"/>
      <use href="#m-move" x="481" y="1370"/>
      <path d="M495 1364H507V1369L501 1373L495 1369Z" fill="#666"/><path d="M501 1370V1396" stroke="#555" stroke-width="1.500"/>
    </svg>
    <svg class="tl-gear" width="15" height="15" viewBox="0 0 14 16" preserveAspectRatio="none"><path d="M5.500 0H8.500L9 2.500L11 1.500L13 3.500L11.800 5.500L14 6.500V9.500L11.800 10.500L13 12.500L11 14.500L9 13.500L8.500 16H5.500L5 13.500L3 14.500L1 12.500L2.200 10.500L0 9.500V6.500L2.200 5.500L1 3.500L3 1.500L5 2.500ZM7 5.500A2.500 2.500 0 1 0 7 10.500A2.500 2.500 0 1 0 7 5.500Z" fill="#7c7c7c"/></svg>
  </footer>

  <div class="taskbar">
    <div class="start"><svg width="17" height="16" viewBox="0 0 17 16"><path d="M0 2.300L7.800 1.200V7.600H0ZM8.800 1L17 0V7.600H8.800ZM0 8.500H7.800V14.800L0 13.700ZM8.800 8.500H17V16L8.800 15Z" fill="#000"/></svg></div>
    <div class="search">
      <svg width="18" height="16" viewBox="0 0 20 22" preserveAspectRatio="none"><circle cx="12" cy="8" r="6.500" fill="none" stroke="#222" stroke-width="1.300"/><path d="M7.500 13L1.500 21" stroke="#222" stroke-width="1.500"/></svg>
      <span class="search-text">Type here to search</span>
      <svg class="search-art" width="68" height="40" viewBox="0 0 68 40"><circle cx="33.500" cy="60" r="36.500" fill="#a9d6ef"/><path d="M8 36C15 28 26 26 34 30C36 33 30 36 26 40H6Z M44 27C50 28 56 32 62 40H46C44 34 41 30 44 27Z" fill="#5ea948"/><path d="M33 33L18 17C13 11 17 5 22 6L33 13L44 6C49 5 53 11 48 17Z" fill="#c8202c"/><path d="M21 6L33 20L45 6M27 8L33 15L39 8M16 14L33 31L50 14M17 9L33 25L49 9" fill="none" stroke="#fff" stroke-width="1.300"/></svg>
    </div>
    <div class="tb-task"><svg width="17" height="15" viewBox="0 0 17 23" preserveAspectRatio="none"><path d="M2 1H16M2 22H16M2 5H12V18H2ZM15 5V7M15 11V13" fill="none" stroke="#111" stroke-width="1.500"/></svg></div>
    <div class="tb-apps">
      <div class="tb-app"><svg width="24" height="22" viewBox="0 0 26 28" preserveAspectRatio="none"><path d="M8 0H17C21 0 20 5 18 9L12 26C10 28 4 28 2 25C-1 20 1 4 8 0Z" fill="#31a5e8"/><path d="M9 1C12 0 18 0 19 3L14 8C10 9 8 6 9 1Z" fill="#a260e0"/><path d="M18 8H22C25 8 27 20 23 25C21 28 15 28 11 27L17 14Z" fill="#ef8a3c"/><path d="M18 8C20 14 20 22 15 27H21C25 25 26 12 23 8Z" fill="#e84a9a"/><path d="M3 22C2 12 6 4 10 1C7 8 10 16 13 21L11 27C7 28 4 26 3 22Z" fill="#2bc7a6"/></svg></div>
      <div class="tb-app tb-run-wide"><svg width="23" height="18" viewBox="0 0 24 26" preserveAspectRatio="none"><path d="M0 1H9L11 4H24V26H0Z" fill="#f5c33f"/><path d="M0 7H24V26H0Z" fill="#fbd96a"/><rect x="8" y="14" width="8" height="12" fill="#3c89c9"/><rect x="10" y="19" width="4" height="7" fill="#fbd96a"/></svg></div>
      <div class="tb-app"><svg width="24" height="17" viewBox="0 0 25 25" preserveAspectRatio="none"><rect width="25" height="25" rx="3" fill="#a1112c"/><text x="12.500" y="19" class="tb-es">ES</text></svg></div>
      <div class="tb-app"><svg width="20" height="22" viewBox="0 0 22 28" preserveAspectRatio="none"><ellipse cx="11" cy="14" rx="10.500" ry="13.500" fill="#14420f"/><text x="11" y="20" class="tb-55">55</text></svg></div>
      <div class="tb-app"><svg width="24" height="24" viewBox="0 0 24 32" preserveAspectRatio="none"><rect width="24" height="32" fill="#e2b93a"/><path d="M4 28L9 16L13 12L14 5L16 12L19 8L18 14L15 19L9 27Z" fill="#4b76ad"/></svg></div>
      <div class="tb-app tb-run-short"><svg width="20" height="22" viewBox="0 0 22 32" preserveAspectRatio="none"><path d="M11 3L21 8V16L11 21L1 16V8Z" fill="#0c3a6b"/><path d="M11 7L17 10L11 13L5 10Z" fill="#fff"/><path d="M4 13L10 16V27L4 23Z" fill="#15385f"/><path d="M18 13L12 16V27L18 23Z" fill="#7e9dbe"/></svg></div>
      <div class="tb-app tb-run"><svg width="23" height="23" viewBox="0 0 24 30" preserveAspectRatio="none"><circle cx="12" cy="17" r="12" fill="#f2683a"/><path d="M12 0C16 4 20 7 21 12C16 7 11 7 8 9C9 6 12 4 12 0Z" fill="#fbb52f"/><circle cx="12" cy="17" r="6" fill="#7a2fc6"/><path d="M7 14C11 11 16 13 16 18C13 15 10 15 7 14Z" fill="#f05f8b"/></svg></div>
      <div class="tb-app"><svg width="26" height="12" viewBox="0 0 26 22" preserveAspectRatio="none"><rect y="8" width="26" height="7" fill="#7f7f6c"/><path d="M2 8L8 2L13 7L19 2L24 8Z" fill="#c89b57"/><rect x="3" y="14" width="7" height="7" fill="#b03030"/><rect x="15" y="13" width="8" height="8" fill="#6c8c4a"/></svg></div>
      <div class="tb-app"><svg width="24" height="23" viewBox="0 0 26 26" preserveAspectRatio="none"><circle cx="13" cy="13" r="13" fill="#0c71b8"/><path d="M2 11C4 4 14 0 22 5C26 8 26 13 24 16H11C11 19 15 20 20 19V23C13 27 5 24 3 17Z" fill="#31c5d0"/><path d="M2 12C1 20 8 26 15 26C9 24 7 18 10 13C7 10 4 10 2 12Z" fill="#0a5fa5"/></svg></div>
      <div class="tb-app tb-run"><svg width="24" height="23" viewBox="0 0 24 26" preserveAspectRatio="none"><circle cx="12" cy="13" r="12" fill="#e8463a"/><path d="M1 9A12 12 0 0 0 9 24.500L14 16Z" fill="#3fa64a"/><path d="M12 7.500H22.500A12 12 0 0 1 10 25L16 16Z" fill="#f7c22e"/><circle cx="12" cy="13" r="6" fill="#fff"/><circle cx="12" cy="13" r="4.500" fill="#3f84ec"/></svg></div>
      <div class="tb-app tb-run"><svg width="24" height="23" viewBox="0 0 24 30" preserveAspectRatio="none"><path d="M17 0L24 3V27L17 30L5 18L1 21L0 20V10L1 9L5 12ZM17 8L10 15L17 22Z" fill="#1579c8"/><path d="M17 0L24 3V27L17 30Z" fill="#1f9be0"/></svg></div>
      <div class="tb-app"><svg width="23" height="23" viewBox="0 0 24 36" preserveAspectRatio="none"><rect x="9" y="1" width="14" height="15" rx="2" fill="#dcdcdc" stroke="#222"/><rect x="12" y="4" width="8" height="7" fill="#1c2ebf"/><rect x="1" y="18" width="14" height="12" fill="#dcdcdc" stroke="#222"/><rect x="4" y="20" width="8" height="7" fill="#1c2ebf"/><rect x="0" y="30" width="17" height="5" fill="#ededed" stroke="#222"/><path d="M12 9L8 17H12L10 24L17 14H13L16 9Z" fill="#f6e51c" stroke="#222" stroke-width=".6"/></svg></div>
      <div class="tb-app tb-run"><svg width="24" height="23" viewBox="0 0 24 32" preserveAspectRatio="none"><rect width="24" height="32" fill="#b30f0f" stroke="#6a0808" stroke-dasharray="2 1"/><text x="12" y="24" class="tb-fz">Fz</text></svg></div>
      <div class="tb-app tb-run tb-active"><svg width="22" height="23" viewBox="0 0 22 36" preserveAspectRatio="none"><rect width="22" height="26" rx="3" fill="#f37a1a"/><rect y="24" width="22" height="12" rx="2" fill="#8c4a17"/><text x="11" y="17" class="tb-f">F</text><text x="11" y="33" class="tb-fus">FUS</text></svg></div>
      <div class="tb-app tb-run"><svg width="24" height="23" viewBox="0 0 24 30" preserveAspectRatio="none"><rect width="24" height="30" rx="1" fill="#2d2d2d"/><rect x="1" y="1" width="8" height="6" fill="#eee"/><path d="M8 22C6 13 12 7 17 8C22 10 22 21 16 25C13 27 10 25 11 22C12 19 16 19 15 15" fill="none" stroke="#d23657" stroke-width="3"/></svg></div>
      <div class="tb-app tb-run"><svg width="20" height="23" viewBox="0 0 22 32" preserveAspectRatio="none"><path d="M2 0H14L22 8V30C22 31 21 32 20 32H2C1 32 0 31 0 30V2C0 1 1 0 2 0Z" fill="#1ba84f"/><path d="M14 0L22 8H14Z" fill="#a5e0b6"/><path d="M5 15H15V25H5ZM5 18H15M5 21H15M8 15V25M12 15V25" fill="none" stroke="#fff"/><rect x="13" y="21" width="5" height="5" fill="#137f3a" stroke="#fff" stroke-width=".8"/></svg></div>
      <div class="tb-app tb-run"><svg width="20" height="23" viewBox="0 0 22 32" preserveAspectRatio="none"><path d="M2 0H14L22 8V30C22 31 21 32 20 32H2C1 32 0 31 0 30V2C0 1 1 0 2 0Z" fill="#1582d8"/><path d="M14 0L22 8H14Z" fill="#a6d4f6"/><path d="M5 13H11M5 17H9M5 21H17M5 25H14" stroke="#fff" stroke-width="1.600"/><rect x="13" y="12" width="5" height="5" fill="#0d5ea5" stroke="#fff" stroke-width=".8"/></svg></div>
      <div class="tb-app tb-run"><svg width="22" height="22" viewBox="0 0 24 32" preserveAspectRatio="none"><rect width="24" height="32" rx="3" fill="#af0b0b"/><path d="M5 25C8 24 11 17 12 8C12 5 10 5 10 8C11 15 15 21 20 21C20 19 15 18 11 19C9 20 6 23 5 25Z" fill="none" stroke="#fff" stroke-width="1.500"/></svg></div>
      <div class="tb-app tb-run"><svg width="19" height="21" viewBox="0 0 22 32" preserveAspectRatio="none"><path d="M2 2H15L22 0V28L20 30L2 32Z" fill="#0d63e6"/><path d="M15 2L22 0L21 8H15Z" fill="#fff"/><path d="M15 11A6 6 0 1 0 15 21" fill="none" stroke="#fff" stroke-width="2.200"/></svg></div>
      <div class="tb-app tb-run"><svg width="21" height="22" viewBox="0 0 22 32" preserveAspectRatio="none"><path d="M4 0H18C21 0 22 2 22 4V28C22 30 20 32 18 32H4C2 32 0 30 0 28V4C0 2 2 0 4 0Z" fill="#159aa1"/><g fill="none" stroke="#bfeaec" stroke-width="1.800"><circle cx="7" cy="16" r="3.600"/><circle cx="15" cy="16" r="3.600"/></g></svg></div>
      <div class="tb-app tb-run"><svg width="20" height="23" viewBox="0 0 22 32" preserveAspectRatio="none"><path d="M2 0H14L22 8V30C22 31 21 32 20 32H2C1 32 0 31 0 30V2C0 1 1 0 2 0Z" fill="#e8501f"/><path d="M14 0L22 8H14Z" fill="#f6b9a1"/><path d="M5 14H17M5 19H10M5 24H10" stroke="#fff" stroke-width="1.500"/><rect x="12" y="19" width="6" height="6" fill="none" stroke="#fff"/></svg></div>
      <div class="tb-app tb-run"><svg width="18" height="23" viewBox="0 0 18 36" preserveAspectRatio="none"><rect width="18" height="36" fill="#586a76"/><rect x="2" y="2" width="14" height="7" fill="#4cc5ee"/><g fill="#dbe0e3"><rect x="2" y="12" width="4" height="5"/><rect x="7" y="12" width="4" height="5"/><rect x="12" y="12" width="4" height="5"/><rect x="2" y="19" width="4" height="5"/><rect x="7" y="19" width="4" height="5"/><rect x="2" y="26" width="4" height="7"/><rect x="7" y="26" width="4" height="7"/></g><rect x="12" y="19" width="4" height="14" fill="#29506e"/></svg></div>
      <div class="tb-app tb-run"><svg width="24" height="22" viewBox="0 0 24 36" preserveAspectRatio="none"><rect y="20" width="24" height="16" fill="#f7f7f7"/><path d="M9 12L10 0L15 5L20 2L21 14C22 22 19 30 12 30C6 30 5 20 9 12Z" fill="#a8a8a8"/><circle cx="14" cy="12" r="3" fill="#dadada"/><circle cx="13" cy="24" r="5" fill="#8c8c7c"/></svg></div>
    </div>
    <div class="clock"><span>3:45 PM</span><span>12/3/2024</span></div>
  </div>
  <i class="edge"></i>
</div>
</body>
</html>
```

FILE: styles.css
```css
* { box-sizing: border-box; }
html, body { margin: 0; padding: 0; background: #fff; }
ul { list-style: none; margin: 0; padding: 0; }
svg { display: block; flex: none; }
.defs { position: absolute; }

.app {
  position: relative;
  width: 2560px;
  height: 1440px;
  display: flex;
  flex-direction: column;
  overflow: hidden;
  font-family: Roboto, "Liberation Sans", sans-serif;
  color: #3d3d3d;
}
.edge { position: absolute; right: 0; top: 23px; width: 1px; height: 1377px; background: #3a3a3a; }

/* title bar */
.titlebar {
  height: 31px;
  display: flex;
  align-items: center;
  padding-left: 9px;
  background: #fff;
  border-top: 1px solid #e9e9e9;
}
.logo-f { font: 700 9px "Liberation Sans", sans-serif; fill: #fff; text-anchor: middle; }
.title-text { margin-left: 6px; font-size: 11.750px; color: #111; }
.win-btns { display: flex; margin-left: auto; margin-right: 1px; }

/* tabs */
.tabstrip {
  height: 32px;
  padding: 4px 0 0 8px;
  display: flex;
  background: #c8c8c8;
}
.home-tab {
  width: 39px;
  background: #bcbcbc;
  border-radius: 5px 5px 0 0;
  display: flex;
  justify-content: center;
  align-items: flex-end;
  padding-bottom: 6px;
}
.doc-tab {
  width: 1045px;
  margin-left: 4px;
  border-radius: 6px 6px 0 0;
  display: grid;
  grid-template-columns: 1fr auto 1fr;
  align-items: center;
  font-size: 12.500px;
}
.doc-off { background: #b9b9b9; color: #666; }
.doc-on { background: #f0f0f0; color: #444; }
.doc-label { display: flex; align-items: center; gap: 4px; margin-right: 8px; margin-top: -1px; }
.doc-x { justify-self: end; margin-right: 6px; font-size: 13px; color: #777; }
.plus-tab {
  width: 27px;
  margin-left: 5px;
  background: #bcbcbc;
  display: flex;
  align-items: center;
  justify-content: center;
  border-radius: 4px 4px 0 0;
}
.status-icons { margin-left: 4px; }
.status-num { font: 11px Roboto, sans-serif; fill: #444; }
.status-q { font: 700 13px Roboto, sans-serif; fill: #ddd; text-anchor: middle; }

/* ribbon */
.ribbon {
  height: 82px;
  display: flex;
  background: #f1f1f1;
  border-bottom: 1px solid #dcdcdc;
}
.ribbon-foot { height: 3px; background: #f5f5f5; }
.design-wrap { width: 130px; padding: 10px 10px 10px 11px; }
.design-btn {
  width: 109px;
  height: 61px;
  border: 2px solid #e0e0e0;
  border-radius: 5px;
  background: #f2f2f2;
  font: 400 11px Roboto, sans-serif;
  color: #3d3d3d;
  letter-spacing: .4px;
}
.tri-down {
  display: inline-block;
  margin-left: 4px;
  vertical-align: 2px;
  border: 3px solid transparent;
  border-top: 4px solid #333;
  border-bottom: 0;
}
.ribbon-main { flex: 1; display: flex; flex-direction: column; }
.ribbon-tabs {
  height: 26px;
  padding-left: 20px;
  display: grid;
  grid-template-columns: 77px 93px 73px 113px 88px 88px auto;
  justify-content: start;
}
.rtab { position: relative; height: 22px; line-height: 22px; font-size: 10.800px; color: #404040; }
.rtab-on { color: #1a9cd8; font-weight: 500; }
.rtab-on::after { content: ""; position: absolute; left: -13px; width: 56px; top: 22px; height: 3px; background: #1a9cd8; }
.ribbon-groups { display: flex; height: 55px; }
.rgroup {
  display: flex;
  flex-direction: column;
  align-items: center;
  border-right: 2px solid #e3e3e3;
}
.ricons { display: flex; gap: 11px; margin-top: 1px; height: 39px; }
.rlabel { font-size: 10.800px; line-height: 14px; color: #404040; white-space: nowrap; }
.g-create { width: 263px; padding-right: 3px; }
.g-auto { width: 94px; }
.g-modify { width: 269px; padding-left: 3px; }
.g-assemble { width: 140px; padding-left: 2px; }
.g-config { width: 98px; }
.g-construct { width: 103px; padding-left: 4px; }
.g-inspect { width: 79px; }
.g-insert { width: 140px; padding-left: 2px; }
.g-select { width: 60px; border-right: 0; padding-left: 16px; overflow: visible; }
.select-icon { margin-top: -2px; margin-bottom: 4px; }

/* viewport */
.viewport { position: relative; flex: 1; background: #fff; }
.scene { position: absolute; left: 0; top: 0; }
.tex { mix-blend-mode: multiply; }
.vc-text { font: 400 10px Roboto, sans-serif; fill: #a6a6a6; }
.vc-top { font-size: 8px; }
.vc-axis { font: 400 14px Roboto, sans-serif; }
.vc-z { fill: #8a8aee; }
.vc-x { fill: #e87b7b; }

.panel { position: absolute; left: 3px; width: 300px; }
.browser { top: 4px; }
.comments { top: 1177px; }
.panel-head {
  height: 25px;
  display: flex;
  align-items: center;
  padding: 0 6px 0 5px;
  background: #f1f1f1;
  border: 1px solid #c6c6c6;
}
.panel-title { margin-left: 10px; font-size: 10.500px; color: #555; letter-spacing: .2px; }
.panel-title-c { margin-left: 19px; }
.pin { position: relative; margin-left: auto; margin-right: 5px; width: 10px; height: 10px; border-radius: 50%; background: #333; }
.pin b { position: absolute; left: 2px; right: 2px; top: 4px; height: 2px; background: #eee; }
.pin .pin-v { left: 4px; right: 4px; top: 2px; height: 6px; width: 2px; }

.tree { padding-top: 3px; }
.tree-row { height: 24px; display: flex; align-items: center; padding-left: 36px; font-size: 10.700px; color: #444; }
.root-row { padding-left: 16px; }
.root-tri { margin-right: 8px; }
.root-pill { height: 20px; width: 220px; display: flex; align-items: center; padding-left: 4px; gap: 6px; background: #f4f4f4; }
.root-radio { margin-left: -3px; }
.root-name {
  width: 170px;
  height: 20px;
  display: flex;
  align-items: center;
  padding-left: 2px;
  background: #8f8f8f;
  color: #fff;
  font-size: 11.500px;
  font-weight: 500;
}
.root-name span { margin-left: 15px; }
.tree-tri { margin-right: 8px; }
.pill { height: 20px; display: flex; align-items: center; padding: 0 10px 0 3px; background: #f4f4f4; }
.tree-folder { margin-left: 9px; }
.t-doc { margin-left: 12px; }
.t-views { margin-left: 14px; }
.t-item { margin-left: 14px; }

.navbar { position: absolute; left: 1161px; top: 1175px; width: 237px; height: 25px; background: #f3f3f3; }
.feedback { position: absolute; left: 2530px; top: 1181px; }

/* timeline */
.timeline {
  height: 46px;
  display: flex;
  align-items: center;
  justify-content: space-between;
  padding-right: 15px;
  background: #f0f0f0;
  border-top: 1px solid #dcdcdc;
}
.tl-gear { margin-top: 2px; }

/* taskbar */
.taskbar {
  height: 40px;
  display: flex;
  align-items: center;
  position: relative;
  background: linear-gradient(90deg, #e5e5a6 0, #e6e6b4 340px, #e8e4c4 620px, #dbe1d2 740px, #d5e3c3 1000px, #dbe3b8 1300px, #dfe5bf 1500px, #dfe4c8 1800px, #e2e0d0 1980px, #e6dcbc 2060px, #d8dccc 2120px, #ccdbe0 2175px, #ccd9e0 2560px);
}
.start { width: 48px; display: flex; justify-content: center; }
.search {
  width: 287px;
  height: 39px;
  margin-top: 1px;
  display: flex;
  align-items: center;
  padding-left: 12px;
  background: #fff;
  overflow: hidden;
  position: relative;
}
.search-text { margin-left: 9px; font: 400 13.700px "Open Sans", sans-serif; color: #222; }
.search-art { position: absolute; left: 215px; top: 0; }
.tb-task { width: 51px; display: flex; justify-content: center; }
.tb-apps { display: flex; height: 40px; }
.tb-app {
  position: relative;
  width: 49px;
  height: 40px;
  display: flex;
  align-items: center;
  justify-content: center;
}
.tb-run::after, .tb-run-wide::after, .tb-run-short::after {
  content: "";
  position: absolute;
  left: 4px;
  right: 5px;
  bottom: 0;
  height: 2px;
  background: #3d8fc0;
}
.tb-run-short::after { left: 10px; right: 11px; }
.tb-active { background: rgba(255, 255, 255, .5); }
.tb-active::after { left: 0; right: 0; }
.tb-es { font: 700 15px "Liberation Sans", sans-serif; fill: #fff; text-anchor: middle; }
.tb-55 { font: italic 700 15px "Liberation Sans", sans-serif; fill: #f2c21a; text-anchor: middle; }
.tb-fz { font: italic 700 20px "Liberation Sans", sans-serif; fill: #fff; text-anchor: middle; }
.tb-f { font: 700 14px "Liberation Sans", sans-serif; fill: #fff; text-anchor: middle; }
.tb-fus { font: 700 7px "Liberation Sans", sans-serif; fill: #f4d9c2; text-anchor: middle; }
.clock {
  margin-left: auto;
  width: 60px;
  margin-right: 3px;
  display: flex;
  flex-direction: column;
  align-items: center;
  gap: 4px;
  font: 400 11.500px/14px "Open Sans", sans-serif;
  color: #222;
}
```
